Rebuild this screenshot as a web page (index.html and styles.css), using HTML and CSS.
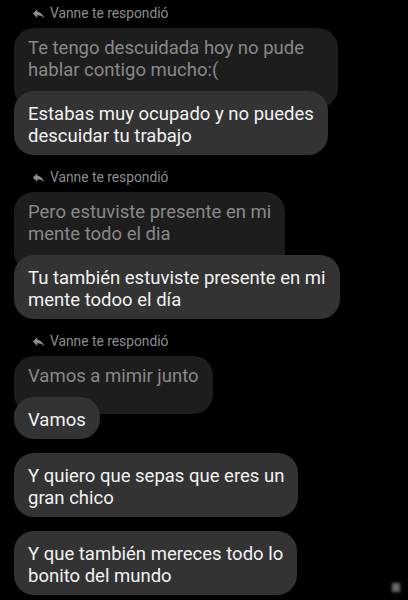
FILE: index.html
```html
<!DOCTYPE html>
<html lang="es">
<head>
<meta charset="utf-8">
<title>Chat</title>
<link rel="stylesheet" href="styles.css">
</head>
<body>
<main class="chat">
  <section class="group">
    <div class="reply-label">
      <svg class="reply-icon" viewBox="0 0 24 24"><path d="M10 9V5l-7 7 7 7v-4.1c5 0 8.5 1.6 11 5.1-1-5-4-10-11-11z"/></svg>
      <span>Vanne te respondió</span>
    </div>
    <div class="quoted quoted-wide">Te tengo descuidada hoy no pude<br>hablar contigo mucho:(</div>
    <div class="bubble reply">Estabas muy ocupado y no puedes<br>descuidar tu trabajo</div>
  </section>

  <section class="group">
    <div class="reply-label">
      <svg class="reply-icon" viewBox="0 0 24 24"><path d="M10 9V5l-7 7 7 7v-4.1c5 0 8.5 1.6 11 5.1-1-5-4-10-11-11z"/></svg>
      <span>Vanne te respondió</span>
    </div>
    <div class="quoted">Pero estuviste presente en mi<br>mente todo el dia</div>
    <div class="bubble reply">Tu también estuviste presente en mi<br>mente todoo el día</div>
  </section>

  <section class="group">
    <div class="reply-label">
      <svg class="reply-icon" viewBox="0 0 24 24"><path d="M10 9V5l-7 7 7 7v-4.1c5 0 8.5 1.6 11 5.1-1-5-4-10-11-11z"/></svg>
      <span>Vanne te respondió</span>
    </div>
    <div class="quoted">Vamos a mimir junto</div>
    <div class="bubble reply">Vamos</div>
    <div class="bubble">Y quiero que sepas que eres un<br>gran chico</div>
    <div class="bubble">Y que también mereces todo lo<br>bonito del mundo</div>
  </section>
</main>
<div class="speck"></div>
</body>
</html>
```

FILE: styles.css
```css
html, body {
  margin: 0;
  padding: 0;
  background: #000;
}

body {
  width: 408px;
  height: 600px;
  overflow: hidden;
  position: relative;
  font-family: Roboto, "Noto Sans", "Liberation Sans", sans-serif;
}

.chat {
  display: flex;
  flex-direction: column;
  gap: 14px;
  padding: 5px 0 0 14px;
}

.group {
  display: flex;
  flex-direction: column;
  align-items: flex-start;
  gap: 14px;
}

.reply-label {
  display: flex;
  align-items: center;
  gap: 4px;
  height: 16px;
  margin-left: 17px;
  margin-bottom: -7px;
  font-size: 13.8px;
  color: #8d8d8d;
}

.reply-icon {
  width: 15px;
  height: 15px;
  fill: #8d8d8d;
}

.quoted {
  background: #1d1d1d;
  color: #898989;
  font-size: 18.5px;
  line-height: 22px;
  padding: 9px 14px 27px;
  border-radius: 20px;
}

.quoted-wide {
  padding-right: 34px;
}

.bubble {
  position: relative;
  background: #333333;
  color: #f2f2f2;
  font-size: 18.5px;
  line-height: 22px;
  padding: 12px 14px 8px;
  border-radius: 20px;
}

.bubble.reply {
  margin-top: -31px;
}

.speck {
  position: absolute;
  left: 392px;
  top: 583px;
  width: 8px;
  height: 9px;
  background: #6a6a6a;
  filter: blur(1.5px);
}
```
